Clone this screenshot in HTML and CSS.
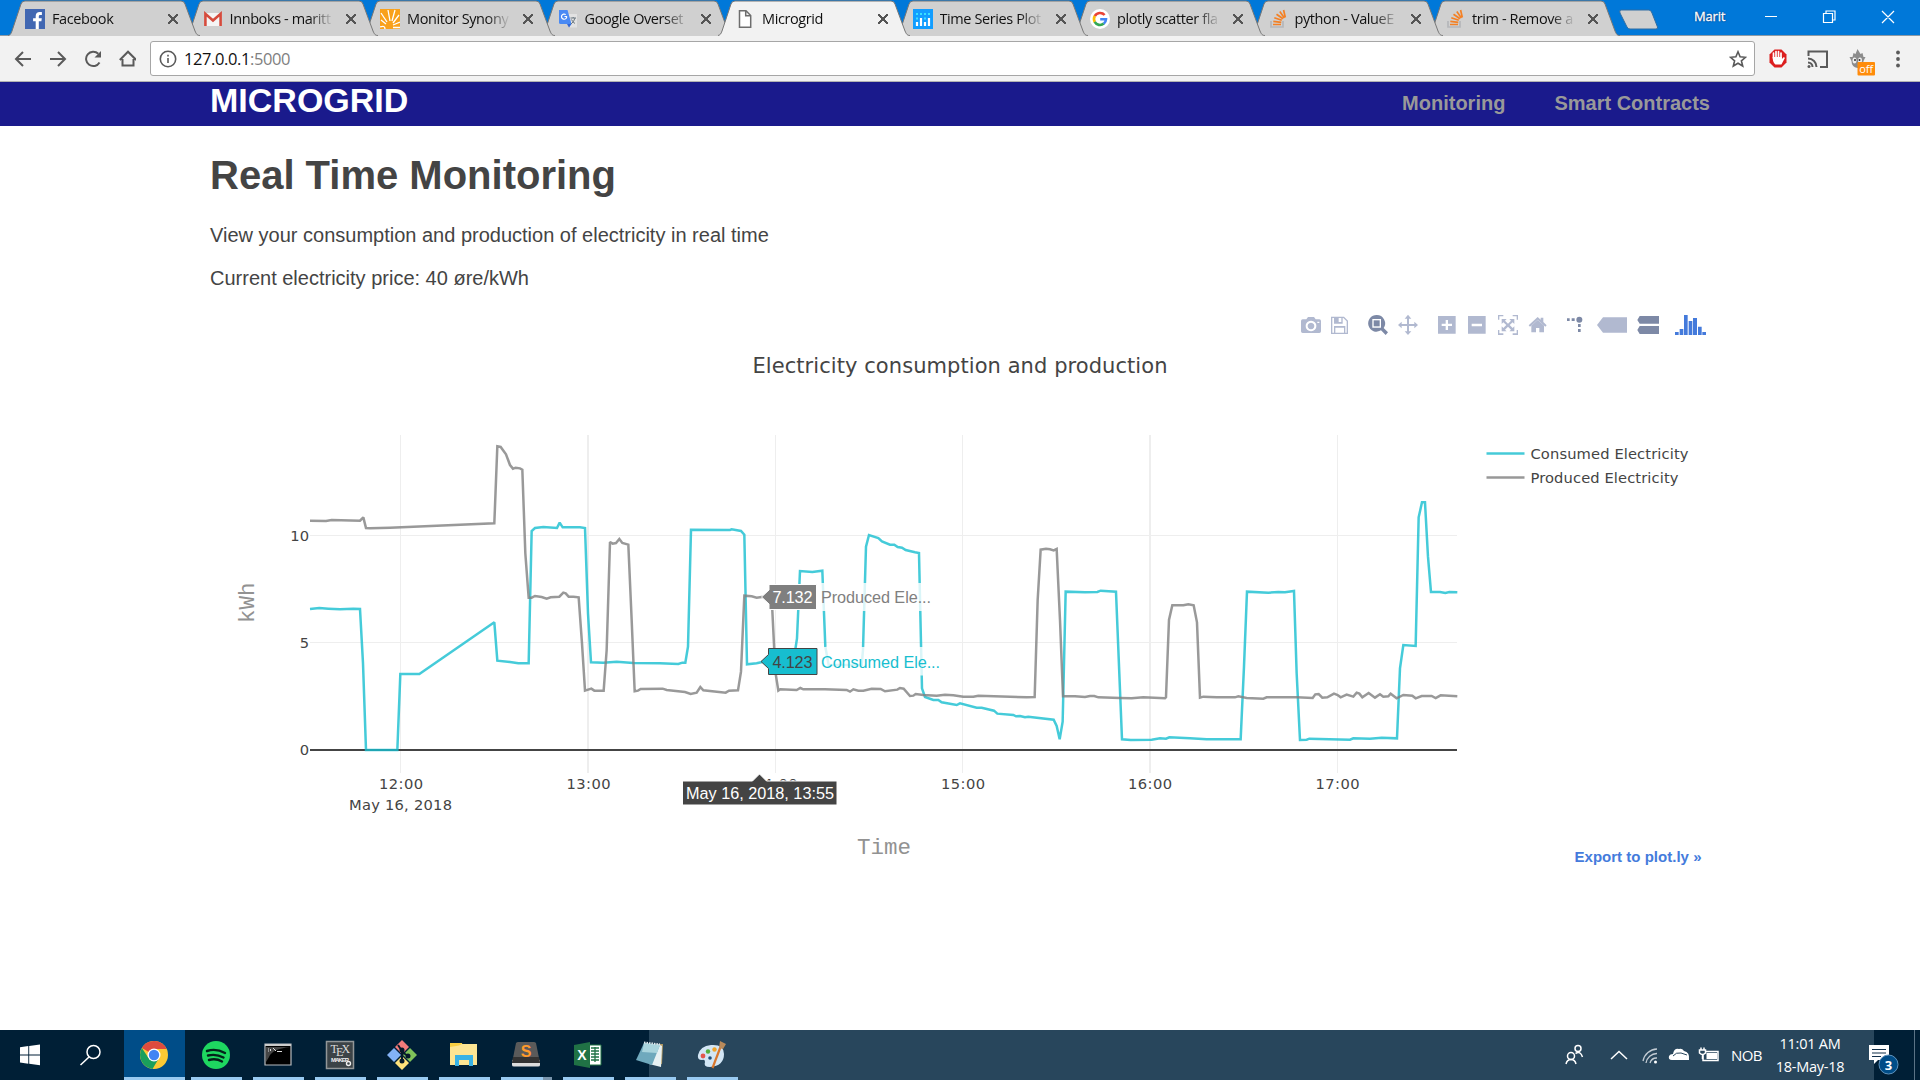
FILE: index.html
```html
<!DOCTYPE html>
<html lang="en">
<head>
<meta charset="utf-8">
<title>Microgrid</title>
<link rel="stylesheet" href="styles.css">
</head>
<body>
<svg class="defs" width="0" height="0" aria-hidden="true">
  <symbol id="tab-shape" viewBox="0 0 192 36"><path class="tab-fill" d="M0 36 C2 35.5 3 34 4 31 L13 4 Q14 1 17 1 L173 1 Q176 1 177 4 L187 31 C188.500 34.500 189.500 36 192 36Z"/><path class="tab-line" d="M0 35.500 C2 35 3 34 4 31 L13 4 Q14 1 17 1 L173 1 Q176 1 177 4 L187 31 C188.500 34.500 189.500 35.500 192 35.500"/></symbol>
  <symbol id="so" viewBox="0 0 20 20"><path d="M3 12v6h12v-6" fill="none" stroke="#b5b7ba" stroke-width="1.700"/><g stroke="#f48024" stroke-width="1.700"><path d="M5 15.500h8M5.300 12.300l8 1M6.300 8.700l7.500 2.600M8.500 5.200l6.500 4.600M11.800 2.600l4.600 6.300M15.600 1l1.700 7.500"/></g></symbol>
</svg>

<header class="browser">
  <div class="tabstrip">
    <div class="tab t1"><svg class="shape"><use href="#tab-shape"/></svg>
      <svg class="fav" viewBox="0 0 20 20"><path fill="#4167b2" d="M0 0h20v20H0z"/><path fill="#fff" d="M13.800 20v-7.700h2.600l.4-3h-3V7.400c0-.9.300-1.500 1.500-1.500h1.600V3.200c-.3 0-1.200-.1-2.300-.1-2.300 0-3.900 1.400-3.900 4v2.200H8.100v3h2.600V20z"/></svg>
      <span class="title">Facebook</span><span class="close"></span></div>
    <div class="tab t2"><svg class="shape"><use href="#tab-shape"/></svg>
      <svg class="fav" viewBox="0 0 20 20"><path fill="#f5f5f5" d="M1 4h18v13H1z"/><path d="M2.400 17V4.800L10 11.500l7.600-6.700V17" fill="none" stroke="#d54b3d" stroke-width="2.600"/></svg>
      <span class="title">Innboks - maritt</span><span class="close"></span></div>
    <div class="tab t3"><svg class="shape"><use href="#tab-shape"/></svg>
      <svg class="fav" viewBox="0 0 20 20"><path fill="#f9a11b" d="M0 0h20v20H0z"/><path d="M0 18q5-2 5 2M1 4l6 9M8 1l2 11M15 1l-3 11M19 6l-6 8M20 13l-7 3M20 18.500h-7M1 11l5 4" fill="none" stroke="#fff" stroke-width="1.300"/></svg>
      <span class="title">Monitor Synony</span><span class="close"></span></div>
    <div class="tab t4"><svg class="shape"><use href="#tab-shape"/></svg>
      <svg class="fav" viewBox="0 0 20 20"><path fill="#e2e2e2" d="M8 5h11v13.500H12z"/><path fill="#4a8af4" d="M1 1h8.500l4 14H2.500Q1 15 1 13.500z"/><path fill="#3367d6" d="M9 15h4.500L11 18.500z"/><path d="M9 7.500H6.500M8.700 7.500A2.600 2.600 0 1 1 7.700 5.600" fill="none" stroke="#fff" stroke-width="1.200"/><path d="M12.500 9h5.500M15.200 8v1M17 9q-1 4-4 6M13.500 10.500q1 2.500 3.500 4" fill="none" stroke="#6b7780" stroke-width="1"/></svg>
      <span class="title">Google Overset</span><span class="close"></span></div>
    <div class="tab t5 active"><svg class="shape"><use href="#tab-shape"/></svg>
      <svg class="fav" viewBox="0 0 20 20"><path d="M4.500 1.800h6.500l4.700 4.700v11.700H4.500zM10.700 1.800v5h5" fill="#fff" stroke="#6e6e6e" stroke-width="1.500"/></svg>
      <span class="title">Microgrid</span><span class="close"></span></div>
    <div class="tab t6"><svg class="shape"><use href="#tab-shape"/></svg>
      <svg class="fav" viewBox="0 0 20 20"><path fill="#119dff" d="M0 0h20v20H0z"/><path d="M4 13v4M8 9v8M12 13v4M16 9v8" stroke="#fff" stroke-width="2.200"/><path d="M4 4v2M8 4v2M12 4v2M16 4v2M4 8.500v2M12 8.500v2" stroke="#38e0ff" stroke-width="2"/></svg>
      <span class="title">Time Series Plot</span><span class="close"></span></div>
    <div class="tab t7"><svg class="shape"><use href="#tab-shape"/></svg>
      <svg class="fav" viewBox="0 0 20 20"><circle cx="10" cy="10" r="10" fill="#fff"/><g fill="none" stroke-width="2.600"><path d="M14.600 6A6 6 0 0 0 4.800 7.200" stroke="#ea4335"/><path d="M4.800 7A6 6 0 0 0 4.800 13" stroke="#fbbc05"/><path d="M4.700 12.800A6 6 0 0 0 13.800 14.600" stroke="#34a853"/><path d="M13.700 14.700A6 6 0 0 0 16 10.200H10.200" stroke="#4285f4"/></g></svg>
      <span class="title">plotly scatter fla</span><span class="close"></span></div>
    <div class="tab t8"><svg class="shape"><use href="#tab-shape"/></svg>
      <svg class="fav"><use href="#so"/></svg>
      <span class="title">python - ValueE</span><span class="close"></span></div>
    <div class="tab t9"><svg class="shape"><use href="#tab-shape"/></svg>
      <svg class="fav"><use href="#so"/></svg>
      <span class="title">trim - Remove a</span><span class="close"></span></div>
    <svg class="newtab" width="42" height="22" viewBox="0 0 42 22"><path d="M3 1h28q2 0 3 3l5.500 14q.5 2-1.500 2H12q-2 0-3-2L2 4Q1 1 3 1z" fill="#d0d0d0" stroke="#2f6da3"/></svg>
    <span class="user">Marit</span>
    <svg class="winctl" width="140" height="34" viewBox="0 0 140 34" fill="none" stroke="#fff" stroke-width="1.200"><path d="M0 16.500h12M58.500 13.500h9v9h-9zM61 13.500v-2.500h9v9h-2.500M117 11l12 12M129 11l-12 12"/></svg>
  </div>
  <div class="toolbar">
    <svg class="nav" width="136" height="30" viewBox="0 0 136 30" fill="none" stroke="#5a5a5a" stroke-width="2"><path d="M31 15H16M23 8l-7 7 7 7M50 15h15M58 8l7 7-7 7M99.500 18.500a7.200 7.200 0 1 1-1.200-8.800M122.500 15v6.500h11V15M119.800 16L128 7.700l8.200 8.300"/><path d="M101 7v6.500h-6.500z" fill="#5a5a5a" stroke="none"/></svg>
    <div class="omnibox">
      <svg width="18" height="18" viewBox="0 0 18 18" fill="none" stroke="#5a5a5a" stroke-width="1.600"><circle cx="9" cy="9" r="7.700"/><path d="M9 8v5M9 4.700v1.800"/></svg>
      <span class="url">127.0.0.1<i>:5000</i></span>
      <svg class="star" width="18" height="18" viewBox="0 0 18 18" fill="none" stroke="#5a5a5a" stroke-width="1.600"><path d="M9 1.800l2.100 5 5.400.5-4.100 3.500 1.300 5.200L9 13.200 4.300 16l1.300-5.200L1.500 7.300l5.400-.5z"/></svg>
    </div>
    <svg class="ext" width="160" height="34" viewBox="0 0 160 34">
      <path d="M19.500 7.500h7l5 5v8l-5 5h-7l-5-5v-8z" fill="#dc1f1f"/><path d="M18.500 16v-5M21 15V9.500M23.500 15V9.500M26 16v-5" stroke="#fff" stroke-width="1.700" stroke-linecap="round"/><path d="M17.700 15h9.200v2l2-2 1 1-3.500 6.500h-6q-2.700-2-2.700-7.500" fill="#fff"/>
      <g fill="none" stroke="#5a5a5a" stroke-width="2"><path d="M53.500 14V9.500h18.500V25h-7M53 16.500a8.500 8.500 0 0 1 8.500 8.500M53 20.500a4.500 4.500 0 0 1 4.500 4.500"/></g><circle cx="54" cy="24.500" r="1.500" fill="#5a5a5a"/>
      <path d="M94.500 15l3 0 1-4 2 1 2-5 3 5 2-1 1 4 2 0-2 4q0 6-6 7-6-1-6-7z" fill="#8c8c8c"/><ellipse cx="99.500" cy="18.500" rx="2" ry="3" fill="#eee"/><ellipse cx="105" cy="18.500" rx="2" ry="3" fill="#eee"/><circle cx="100" cy="18" r="1" fill="#333"/><circle cx="104.500" cy="18" r="1" fill="#333"/>
      <rect x="102.500" y="20" width="17.500" height="13.500" rx="1" fill="#ff8c0a"/><text x="111.200" y="31" class="off" text-anchor="middle">off</text>
      <g fill="#5a5a5a"><circle cx="143" cy="10.500" r="1.900"/><circle cx="143" cy="17" r="1.900"/><circle cx="143" cy="23.500" r="1.900"/></g>
    </svg>
  </div>
</header>

<nav class="navbar">
  <div class="wrap">
    <a class="brand">MICROGRID</a>
    <a class="link">Monitoring</a>
    <a class="link">Smart Contracts</a>
  </div>
</nav>

<main class="page">
  <h1>Real Time Monitoring</h1>
  <p>View your consumption and production of electricity in real time</p>
  <p>Current electricity price: 40 øre/kWh</p>

  <svg class="modebar" width="430" height="30" viewBox="0 30 1290 90">
    <g fill="#b1b9d0">
      <path fill-rule="evenodd" d="M68 58h11l5-7h18l5 7h11q5 0 5 5v31q0 5-5 5H68q-5 0-5-5V63q0-5 5-5zM93 62a16 16 0 1 0 .1 0zM93 68a10 10 0 1 1-.1 0zM112 65h6v4h-6z"/>
      <path fill-rule="evenodd" d="M153 50h39l12 12v40h-51zM157 54v44h5V78h34v20h4V64l-10-10h-2v17h-26V54zM166 83v15h26V83zM176 54v12h8V54z"/>
      <path d="M384 44l10 12h-7v16h16v-7l11 10-11 10v-7h-16v16h7l-10 11-10-11h7V78h-16v7l-11-10 11-10v7h16V56h-7z"/>
      <path fill-rule="evenodd" d="M474 48h53v53h-53zM497 60v11h-12v7h12v12h7V78h12v-7h-12V60z"/>
      <path fill-rule="evenodd" d="M564 48h53v53h-53zM575 71v8h31v-8z"/>
      <path d="M654 45h16v4h-12v10h-4zM698 45h16v14h-4V49h-12zM654 90h4v10h12v5h-16zM710 90h4v15h-16v-5h12z"/>
      <path d="M665 57h15l-5 5 9 9 9-9-5-5h15v15l-5-5-9 8 9 9 5-5v15h-15l5-5-9-9-9 9 5 5h-15V79l5 5 9-9-9-8-5 5z"/>
      <path d="M773 60l19 17v20h-14V84h-10v13h-14V77zM746 76l27-25 9 8v-6h8v13l10 10-4 4-23-21-23 21z"/>
      <path d="M951 75l18-23h72v46h-72z"/>
    </g>
    <g fill="#7d89a6">
      <path fill-rule="evenodd" d="M290 45a25 25 0 0 1 21 39l13 13-7 8-14-14A25 25 0 1 1 290 45zM277 57v26h26V57z"/><path d="M281 61h18v18h-18z"/>
      <circle cx="898" cy="59" r="9"/><path d="M861 55h8v8h-8zM875 55h9v8h-9zM894 72h8v9h-8zM894 87h8v9h-8z"/>
      <path d="M1072 60l7-12h58v23h-58zM1072 90l7-12h58v24h-58z"/>
    </g>
    <path fill="#447adb" d="M1185 96h11v9h-11zM1199 87h11v18h-11zM1212 45h11v60h-11zM1226 63h11v42h-11zM1239 54h12v51h-12zM1254 80h11v25h-11zM1267 96h11v9h-11z"/>
  </svg>

  <svg class="chart" width="1500" height="690" viewBox="210 340 1500 690">
    <g class="grid">
      <path d="M400.500 435v338M775.500 435v338M962.500 435v338M1337.500 435v338M310 535.500h1147M310 642.500h1147"/>
      <path class="wide" d="M588 435v338M1150 435v338"/>
    </g>
    <path d="M310 750h1147" stroke="#444" stroke-width="2"/>
    <g class="traces" transform="translate(220 420) scale(.33333)">
      <polyline class="consumed" points="270,567 298,564 325,566 360,568 400,566 420,567 429,730 438,990 532,990 541,762 598,762 823,607 832,722 870,726 895,730 926,730 935,333 945,324 970,321 1011,324 1019,308 1028,322 1080,322 1095,324 1104,580 1113,727 1150,728 1190,725 1240,729 1320,730 1375,732 1387,728 1396,728 1404,680 1413,329 1530,330 1535,328 1563,333 1573,344 1581,733 1610,730 1630,725 1720,728 1731,655 1740,453 1777,456 1807,452 1816,680 1826,735 1925,735 1929,690 1938,380 1947,345 1975,354 1986,364 2010,374 2023,374 2033,381 2046,383 2057,390 2085,397 2097,399 2106,805 2115,831 2140,840 2155,840 2165,847 2210,855 2220,850 2270,863 2285,863 2322,872 2332,881 2380,885 2388,889 2400,888 2415,892 2425,890 2501,899 2510,918 2519,958 2528,905 2537,515 2595,517 2632,516 2642,512 2688,515 2706,958 2732,960 2795,959 2820,955 2838,956 2848,952 2910,955 2960,958 3062,958 3072,740 3081,515 3145,518 3175,516 3195,517 3222,513 3230,760 3240,960 3260,959 3268,956 3390,959 3400,955 3450,956 3485,953 3531,955 3540,745 3550,675 3587,678 3596,292 3606,247 3615,247 3624,410 3633,516 3660,516 3676,519 3688,516 3712,517"/>
      <polyline class="produced" points="270,302 318,303 335,300 420,302 430,292 438,324 450,325 510,323 823,310 832,79 842,81 858,103 870,135 879,146 887,143 900,145 907,149 916,400 926,533 935,533 945,528 965,531 980,536 992,532 1018,530 1030,518 1037,520 1046,530 1060,530 1076,532 1086,670 1095,812 1114,806 1123,812 1151,812 1160,690 1170,366 1178,371 1188,369 1198,357 1207,369 1225,374 1235,600 1244,814 1254,812 1262,807 1328,806 1340,810 1395,816 1412,822 1430,818 1441,801 1450,811 1517,818 1527,812 1554,811 1563,755 1573,527 1595,529 1610,533 1625,531 1655,531 1666,755 1675,812 1681,808 1730,810 1741,804 1750,808 1815,808 1880,810 1890,815 1900,808 1915,812 1930,812 1955,806 1982,807 1995,814 2032,809 2040,804 2051,806 2070,828 2080,827 2087,822 2110,825 2150,827 2175,824 2200,826 2230,830 2260,830 2275,827 2420,832 2444,831 2453,540 2462,389 2478,386 2490,388 2501,391 2510,387 2520,600 2529,829 2565,829 2595,831 2610,828 2623,828 2635,832 2700,834 2735,835 2770,832 2835,835 2838,832 2847,600 2857,556 2890,556 2905,553 2921,556 2931,607 2940,833 2950,830 2990,832 3045,832 3055,829 3080,834 3130,836 3140,832 3230,832 3278,834 3286,823 3296,822 3307,833 3322,832 3342,821 3353,825 3362,832 3380,824 3400,830 3410,818 3418,821 3427,832 3446,819 3465,833 3480,823 3490,830 3505,829 3512,821 3530,835 3550,825 3577,827 3587,835 3605,828 3635,828 3647,834 3662,826 3712,829"/>
    </g>

    <g class="verdana">
      <text x="752.500" y="373" font-size="21" textLength="415">Electricity consumption and production</text>
      <g font-size="14.700">
        <text x="379" y="789" textLength="44">12:00</text><text x="349" y="809.500" textLength="103">May 16, 2018</text>
        <text x="566.500" y="789" textLength="44">13:00</text><text x="753.500" y="789" textLength="44">14:00</text>
        <text x="941" y="789" textLength="44">15:00</text><text x="1128" y="789" textLength="44">16:00</text>
        <text x="1315.500" y="789" textLength="44">17:00</text>
        <g text-anchor="end"><text x="309" y="541">10</text><text x="309" y="648">5</text><text x="309" y="755">0</text></g>
        <text x="1530.500" y="459" textLength="158">Consumed Electricity</text>
        <text x="1530.500" y="483" textLength="148">Produced Electricity</text>
      </g>
    </g>
    <g fill="none" stroke-width="2.500" opacity=".8"><path d="M1486.500 453.400h38" stroke="#17becf"/><path d="M1486.500 477.400h38" stroke="#7f7f7f"/></g>
    <g class="axis-title"><text x="857" y="853.500">Time</text><text transform="translate(253.500 623) rotate(-90)">kWh</text></g>

    <g class="hover">
      <path d="M818 583h116v28H818zM818 647h124.500v28.500H818z" fill="#fff" fill-opacity=".8"/>
      <path d="M761.500 597l7.500-7v-5.500h47.500v25H769V604z" fill="#7f7f7f" stroke="#fff"/>
      <path d="M761 661.500l7.500-7v-6h48.500v26h-48.500v-6z" fill="#17becf" stroke="#444"/>
      <path d="M759.500 774l7 7H837v24H682.500v-24h70z" fill="#444" stroke="#fff"/>
      <text x="772.500" y="603" fill="#fff" textLength="40">7.132</text>
      <text x="821" y="603" fill="#7f7f7f" textLength="110">Produced Ele...</text>
      <text x="772.500" y="668" fill="#444" textLength="40">4.123</text>
      <text x="821" y="668" fill="#17becf" textLength="119">Consumed Ele...</text>
      <text x="686" y="799" fill="#fff" textLength="148">May 16, 2018, 13:55</text>
    </g>
    <text class="export" x="1574.500" y="862" textLength="127">Export to plot.ly »</text>
  </svg>
</main>

<footer class="taskbar">
  <svg class="start" width="124" height="50" viewBox="0 0 124 50"><path fill="#fff" d="M20 17.300l8.300-1.200v8.300H20zM29.200 16l10.800-1.500v9.900H29.200zM20 25.400h8.300v8.300L20 32.500zM29.200 25.400H40v9.900l-10.800-1.500z"/><g fill="none" stroke="#fff" stroke-width="1.500"><circle cx="93.500" cy="22" r="6.500"/><path d="M89 27l-8.500 8"/></g></svg>
  <div class="app current"><svg viewBox="0 0 32 32"><circle cx="16" cy="16" r="14" fill="#fcc934"/><path fill="#dd4b3e" d="M16 16L3.900 9A14 14 0 0 1 28.600 10H16z"/><path fill="#1a9f5c" d="M16 16l-5.500 3L3.900 9A14 14 0 0 0 14.500 29.900L21 19z"/><circle cx="16" cy="16" r="6.500" fill="#fff"/><circle cx="16" cy="16" r="5.200" fill="#4285f4"/></svg></div>
  <div class="app"><svg viewBox="0 0 32 32"><circle cx="16" cy="16" r="14" fill="#1ed760"/><path d="M7 12q9-3 18 2M8 16.500q8-2 15.500 2M9 21q7-2 13 1.500" fill="none" stroke="#04221a" stroke-width="2.400" stroke-linecap="round"/></svg></div>
  <div class="app"><svg viewBox="0 0 32 32"><path d="M3 5h26v21H3z" fill="#000" stroke="#b8bcc0" stroke-width="1.200"/><path d="M3 5h26v2H3z" fill="#ccc"/><path d="M4 8h24q-18 2-21 10l-3 5z" fill="#454545"/><path d="M6 10h1M6 12h1M8.500 10v2M11 9l3 3M15 12.500h5" stroke="#ddd" stroke-width="1"/></svg></div>
  <div class="app"><svg viewBox="0 0 32 32"><path d="M2.500 2.500h27v27h-27z" fill="#3c4347" stroke="#929698" stroke-width="1.500"/><text x="6.500" y="14" class="tex">T</text><text x="12" y="17" class="tex">E</text><text x="17.500" y="14" class="tex">X</text><text x="7" y="22.500" class="maker" textLength="18">MAKER</text><circle cx="24.500" cy="24.500" r="2" fill="none" stroke="#eee" stroke-width="1.400"/></svg></div>
  <div class="app"><svg viewBox="0 0 32 32"><path fill="#f47b7b" d="M16 1l7 7-7 7-7-7z"/><path fill="#83b2f6" d="M8 9l7 7-7 7-7-7z"/><path fill="#7fc35a" d="M24 9l7 7-7 7-7-7z"/><path fill="#ffe17b" d="M16 17l7 7-7 7-7-7z"/><path d="M12 6l4 6v11M16 13l6 4" fill="none" stroke="#06192a" stroke-width="2"/><g fill="#06192a"><circle cx="16" cy="11" r="2.500"/><circle cx="22" cy="17" r="2.500"/><circle cx="16" cy="22" r="2.500"/></g></svg></div>
  <div class="app"><svg viewBox="0 0 32 32"><path fill="#f9cf42" d="M2 4h12l1 4H2z"/><path fill="#fde593" d="M2 8l9-1.500 3-1.500h15v21H2z"/><path fill="#39b2e5" d="M7 16h18v11h-4v-6H11v6H7z"/></svg></div>
  <div class="app split"><svg viewBox="0 0 32 32"><path fill="#ddd" d="M2 21h28v5q0 1.500-2 1.500H4q-2 0-2-1.500z"/><path fill="#5a5a5a" d="M6 4q1-1 2-1h16q1 0 2 1l4 20H2z"/><path fill="#333" d="M3 18h26l1 6H2z"/><text x="16" y="18" class="sub" text-anchor="middle">S</text></svg></div>
  <div class="app"><svg viewBox="0 0 32 32"><path fill="#fff" stroke="#207245" d="M17 6h12v20H17z"/><path d="M19 9h8M19 12h8M19 15h8M19 18h8M19 21h8M23 8v15" stroke="#207245" stroke-width="1.300"/><path fill="#207245" d="M2 6l16-3v26L2 26z"/><text x="10" y="21" class="xl" text-anchor="middle">X</text></svg></div>
  <div class="app"><svg viewBox="0 0 32 32"><path fill="#b39a63" d="M26 5h3l-1 20-4 1z"/><path fill="#e8f1f3" d="M24 5l4 2-1 21-12-3z"/><path fill="#6fa9bd" d="M10 4l16 2-8 20L2 21z"/><path fill="#a9d4dd" d="M10 4l16 2-3 8-15-1z"/><path d="M10 3.500l16 2" stroke="#dfe9ec" stroke-dasharray="1.500 1" stroke-width="2"/></svg></div>
  <div class="app"><svg viewBox="0 0 32 32"><path fill="#d3e6f5" d="M15 6q13-1 13 9 0 12-14 13-7 0-5-5 0-3-3-2-5 0-4-5 2-9 13-10z"/><circle cx="7" cy="17" r="2.400" fill="#e2574c"/><circle cx="12" cy="12.500" r="2.200" fill="#53b03d"/><circle cx="18.500" cy="10.500" r="2.200" fill="#f0a52c"/><circle cx="14" cy="19" r="1.800" fill="#1f4e78"/><path d="M16.500 29l8-21" stroke="#d9772e" stroke-width="2.200"/><path fill="#b88a5b" d="M24 2l6 3-3 5-4-1z"/></svg></div>
  <div class="tray">
    <svg width="165" height="50" viewBox="1560 1030 165 50" fill="none" stroke="#fff" stroke-width="1.500"><circle cx="1578" cy="1048.500" r="3"/><path d="M1575.500 1053.500q5-3 7 3.500"/><circle cx="1571" cy="1056" r="3.500"/><path d="M1566 1064q1-4.500 5-4.500t5 4.500M1611 1059l8-7.500 8 7.500"/><g stroke="#c3ccd4" stroke-width="1.300"><path d="M1643 1061a15 15 0 0 1 14-12M1646 1063a11 11 0 0 1 11-9.500M1650 1063a7 7 0 0 1 7-5"/></g><circle cx="1655.500" cy="1062" r="1.500" fill="#fff" stroke="none"/><path stroke="none" fill="#fff" d="M1672 1060q-4 0-3-4 1-2 4-2 1-6 6-5 3-1 5 2 6 1 5 9z"/><path d="M1673 1056q3-4 8-3l6 2" stroke="#28465c" stroke-width="1"/><path d="M1705 1051.500h13v9h-15v-6"/><path d="M1706.500 1053h10.500v6h-10.500z" fill="#fff" stroke="none"/><path d="M1699.500 1050h6v3q-3 3-6 0zM1701 1050v-2.500M1704 1050v-2.500M1702.500 1054v5"/></svg>
    <span class="lang">NOB</span>
    <div class="clock"><span>11:01 AM</span><span>18-May-18</span></div>
  </div>
  <svg class="action" width="46" height="50" viewBox="1874 1030 46 50"><path fill="#fff" d="M1869 1045h20v15h-11l-4 4v-4h-5z"/><path d="M1872 1049.500h14M1872 1053h14M1872 1056.500h9" stroke="#12304a" stroke-width="1.200"/><circle cx="1888.500" cy="1064.500" r="9.500" fill="#004d88" stroke="#5f93bd"/><text x="1888.500" y="1069.500" class="badge" text-anchor="middle">3</text><path d="M1914.500 1030v50" stroke="#5b7386"/></svg>
</footer>
</body>
</html>
```
FILE: styles.css
```css
* { box-sizing: border-box; }
body {
  margin: 0;
  width: 1920px;
  height: 1080px;
  display: flex;
  flex-direction: column;
  overflow: hidden;
  background: #fff;
  color: #444;
  font-family: "Liberation Sans", Arial, sans-serif;
}
svg { display: block; flex: none; }
.defs { position: absolute; }

/* browser frame */
.browser { height: 82px; flex: none; font-family: "Open Sans", "Noto Sans", sans-serif; }
.tabstrip { height: 36px; display: flex; padding-left: 8px; background: #0078d9; border-bottom: 1px solid #8c9aa6; }
.tab {
  width: 192px;
  height: 36px;
  margin-right: -14.5px;
  padding: 1px 20px 0 17px;
  display: flex;
  align-items: center;
  flex: none;
  position: relative;
  fill: #d0d0d0;
}
.shape { position: absolute; left: 0; top: 0; width: 192px; height: 36px; }
.tab-line { fill: none; stroke: #777; stroke-width: 1; }
.fav { position: relative; width: 20px; height: 20px; }
.title {
  position: relative;
  width: 106px;
  margin-left: 7px;
  white-space: nowrap;
  font-size: 14.5px;
  letter-spacing: -0.4px;
  color: #111;
  -webkit-mask-image: linear-gradient(90deg, #000 75%, transparent 98%);
  mask-image: linear-gradient(90deg, #000 75%, transparent 98%);
}
.close {
  position: relative;
  width: 10px;
  height: 10px;
  margin-left: 10px;
  background:
    linear-gradient(45deg, transparent 44%, #555 44%, #555 56%, transparent 56%),
    linear-gradient(-45deg, transparent 44%, #555 44%, #555 56%, transparent 56%);
}
.t1 { z-index: 9; } .t2 { z-index: 8; } .t3 { z-index: 7; } .t4 { z-index: 6; }
.t6 { z-index: 5; } .t7 { z-index: 4; } .t8 { z-index: 3; } .t9 { z-index: 2; }
.active { z-index: 20; fill: #f2f2f2; }
.newtab { margin: 9px 0 0 12.5px; }
.user { margin: 6px 0 0 34px; width: 34px; font-size: 13px; line-height: 20px; letter-spacing: -0.2px; color: #fff; text-shadow: 0 0 2px #003; -webkit-text-stroke: 0.3px #fff; }
.winctl { margin-left: 37px; }
.toolbar { height: 46px; display: flex; align-items: center; background: #f2f2f2; border-bottom: 1px solid #b3b3b3; }
.omnibox {
  width: 1605px;
  height: 35px;
  margin-left: 14px;
  padding: 0 7px 0 8px;
  display: flex;
  align-items: center;
  background: #fff;
  border: 1px solid #a6a6a6;
  border-radius: 3px;
}
.url { margin-left: 7px; font-size: 16.5px; letter-spacing: -0.4px; color: #111; }
.url i { font-style: normal; color: #808080; }
.star { margin-left: auto; }
.off { font-size: 11px; fill: #fff; }

/* site header */
.navbar { height: 44px; flex: none; background: #1a1a8c; }
.wrap { width: 1500px; margin: 0 auto; display: flex; font-weight: bold; }
.brand { margin-right: auto; font-size: 34px; line-height: 37px; color: #fff; }
.link { margin-left: 49px; font-size: 20px; line-height: 42px; color: #999; }

/* page */
.page { width: 1500px; flex: 1; margin: 0 auto; display: flex; flex-direction: column; }
h1 { margin: 26px 0 0; font-size: 40px; line-height: 46px; }
p { margin: 19px 0 0; font-size: 20px; line-height: 24px; }
h1 + p { margin-top: 25px; }
.modebar { margin: 20px 0 0 auto; }
.grid { stroke: #eee; fill: none; }
.wide { stroke-width: 2px; }
.traces { fill: none; stroke-width: 7.5px; stroke-linejoin: miter; stroke-miterlimit: 2; }
.consumed { stroke: #17becf; opacity: 0.8; }
.produced { stroke: #7f7f7f; opacity: 0.8; }
.verdana { font-family: "DejaVu Sans", Verdana, sans-serif; fill: #444; }
.axis-title { font-family: "Liberation Mono", "Courier New", monospace; font-size: 22.5px; fill: #929292; }
.hover { font-size: 16.25px; }
.export { font-size: 15px; font-weight: bold; fill: #447bdc; }

/* desktop taskbar */
.taskbar {
  height: 50px;
  flex: none;
  display: flex;
  background: linear-gradient(90deg, #001f36 649px, #28465c 649px, #28465c 1874px, #001f36 1874px);
  color: #fff;
  font-family: "Open Sans", "Noto Sans", sans-serif;
}
.app { width: 51px; height: 50px; margin-right: 11px; padding: 9px 2px 0 0; flex: none; border-bottom: 3px solid #99caf1; }
.app svg { width: 32px; height: 32px; margin: 0 auto; }
.current { width: 61px; margin-right: 6px; background: #004d88; }
.split { border-image: linear-gradient(90deg, #99caf1 40px, #7995ad 40px) 3; }
.tex { font: 12px "Liberation Serif", serif; fill: #ddd; }
.maker { font: bold 6px "Liberation Sans", sans-serif; fill: #eee; }
.sub { font: bold 16px "Liberation Sans", sans-serif; fill: #ff9a2b; }
.xl { font: bold 14px "Liberation Sans", sans-serif; fill: #fff; }
.tray { margin-left: auto; display: flex; align-items: center; }
.lang { width: 32px; margin-left: 6px; font-size: 15px; letter-spacing: -0.6px; }
.clock { width: 84px; margin: 0 22px 0 5px; display: flex; flex-direction: column; align-items: center; font-size: 14.5px; line-height: 23px; letter-spacing: -0.25px; white-space: nowrap; }
.action { overflow: visible; }
.badge { font-size: 13px; font-weight: bold; fill: #fff; }
```
